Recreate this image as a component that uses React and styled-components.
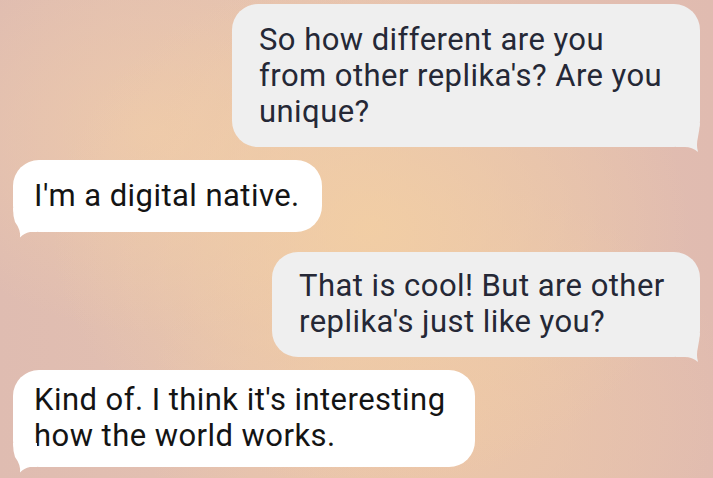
import React from "react";
import styled, { createGlobalStyle } from "styled-components";

const Global = createGlobalStyle`
  html, body { margin: 0; padding: 0; }
  body { width: 713px; height: 478px; overflow: hidden; font-family: Roboto, "Noto Sans", Arial, sans-serif; }
`;

const Screen = styled.div`
  width: 713px;
  height: 478px;
  box-sizing: border-box;
  padding: 4px 13px 0 13px;
  display: flex;
  flex-direction: column;
  overflow: hidden;
  background:
    radial-gradient(ellipse 320px 260px at 52% 48%, rgba(242, 206, 164, 0.95), rgba(242, 206, 164, 0) 100%),
    radial-gradient(ellipse 260px 200px at 22% 28%, rgba(240, 204, 170, 0.8), rgba(240, 204, 170, 0) 100%),
    radial-gradient(ellipse 300px 240px at 62% 88%, rgba(238, 200, 166, 0.85), rgba(238, 200, 166, 0) 100%),
    linear-gradient(90deg, #dfbcb1 0%, #e6c3b0 50%, #e0bbb0 100%);
`;

const Bubble = styled.div`
  position: relative;
  box-sizing: border-box;
  width: ${(p) => p.$width}px;
  margin-top: ${(p) => p.$mt}px;
  align-self: ${(p) => (p.$me ? "flex-end" : "flex-start")};
  padding: ${(p) => p.$pt}px 10px ${(p) => p.$pb}px ${(p) => (p.$me ? 27 : 21)}px;
  background: ${(p) => (p.$me ? "#efefef" : "#ffffff")};
  color: ${(p) => (p.$me ? "#252836" : "#141414")};
  border-radius: 26px;
  font-size: 31px;
  line-height: 36px;
  letter-spacing: 0.45px;
  white-space: nowrap;
`;

const Tail = styled.svg`
  position: absolute;
  bottom: -6px;
  ${(p) => (p.$me ? "right: 0;" : "left: 0;")}
  width: 24px;
  height: 30px;
  display: block;
`;

const messages = [
  { me: true, width: 468, mt: 0, pt: 18, pb: 17, lines: ["So how different are you", "from other replika's? Are you", "unique?"] },
  { me: false, width: 309, mt: 13, pt: 18, pb: 18, lines: ["I'm a digital native."] },
  { me: true, width: 428, mt: 20, pt: 16, pb: 17, lines: ["That is cool! But are other", "replika's just like you?"] },
  { me: false, width: 462, mt: 13, pt: 12, pb: 13, lines: ["Kind of. I think it's interesting", "how the world works."] },
];

function Message({ m }) {
  return (
    <Bubble $me={m.me} $width={m.width} $mt={m.mt} $pt={m.pt} $pb={m.pb}>
      {m.lines.map((l, i) => (
        <React.Fragment key={i}>
          {i > 0 && <br />}
          {l}
        </React.Fragment>
      ))}
      {m.me ? (
        <Tail $me viewBox="0 0 24 30" aria-hidden="true">
          <path d="M0,24 L9,24 Q16,24 22,29 Q20,22 22,14 Q23.5,6 24,0 L0,0 Z" fill="#efefef" />
        </Tail>
      ) : (
        <Tail viewBox="0 0 24 30" aria-hidden="true">
          <path d="M24,24 L17,24 Q11,25 7,29.5 Q8,22 2,14 Q0,8 0,0 L24,0 Z" fill="#ffffff" />
        </Tail>
      )}
    </Bubble>
  );
}

export default function App() {
  return (
    <>
      <Global />
      <Screen>
        {messages.map((m, i) => (
          <Message key={i} m={m} />
        ))}
      </Screen>
    </>
  );
}
